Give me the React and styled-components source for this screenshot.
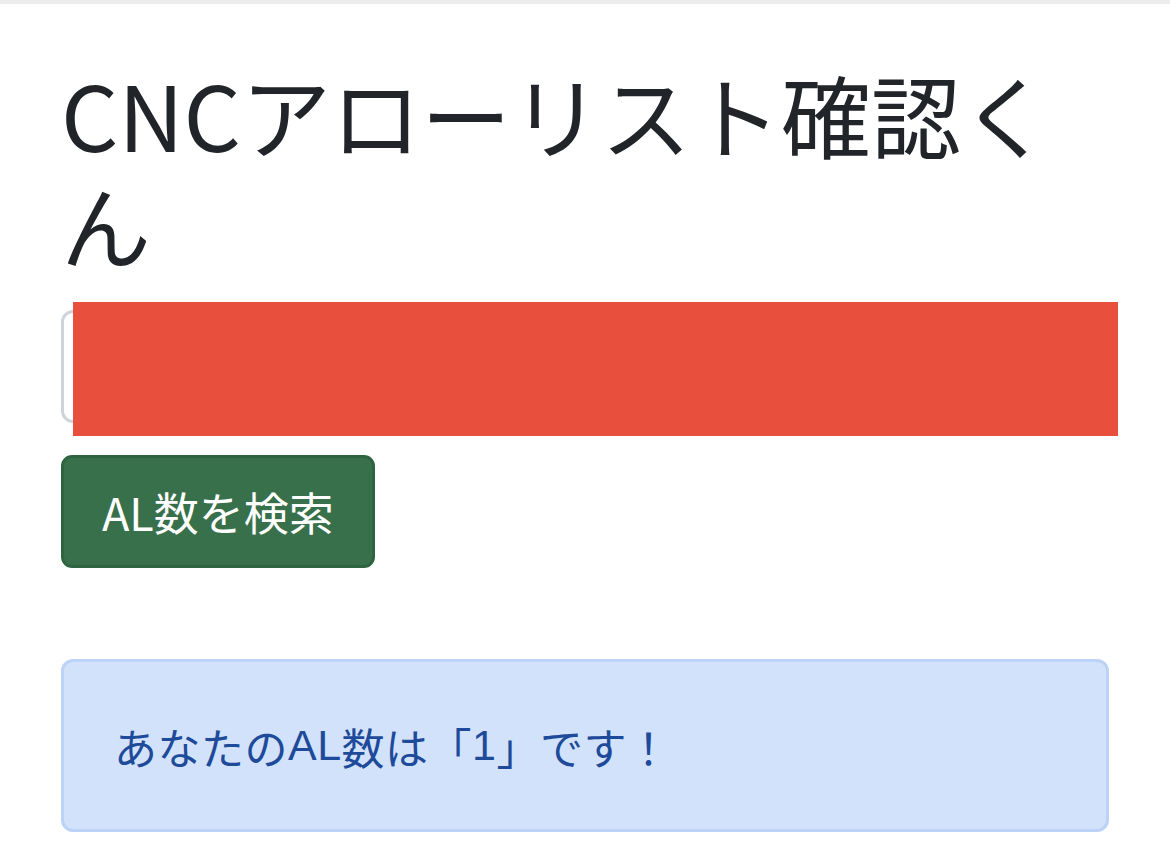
import styled, { createGlobalStyle } from 'styled-components';

const GlobalStyle = createGlobalStyle`
  html, body {
    margin: 0;
    padding: 0;
    background: #fff;
  }
  body {
    font-family: "Noto Sans CJK JP", "Noto Sans", sans-serif;
    color: #212529;
  }
`;

const TopStrip = styled.div`
  height: 4px;
  background: #ececec;
`;

const Container = styled.main`
  padding: 0 60px 0 61px;
  display: flex;
  flex-direction: column;
  align-items: flex-start;
`;

const Title = styled.h1`
  margin: 54px 0 0;
  font-size: 90px;
  font-weight: 400;
  line-height: 110px;
  width: 100%;
`;

const InputWrap = styled.div`
  position: relative;
  width: 100%;
  margin-top: 32px;
`;

const TextInput = styled.input`
  box-sizing: border-box;
  display: block;
  width: 100%;
  height: 113px;
  padding: 18px 36px;
  font-size: 48px;
  font-family: inherit;
  border: 3px solid #ced4da;
  border-radius: 12px;
  background: #fff;
`;

const Redaction = styled.div`
  position: absolute;
  left: 12px;
  top: -8px;
  right: -8px;
  bottom: -13px;
  background: #e84f3d;
`;

const SearchButton = styled.button`
  margin-top: 32px;
  box-sizing: border-box;
  height: 113px;
  padding: 0 38px;
  font-family: inherit;
  font-size: 45px;
  color: #fff;
  background: #37704b;
  border: 3px solid #2f6441;
  border-radius: 11px;
  cursor: pointer;
`;

const Alert = styled.div`
  box-sizing: border-box;
  margin-top: 91px;
  width: calc(100% - 1px);
  height: 173px;
  display: flex;
  align-items: center;
  padding: 0 50px;
  font-size: 43px;
  letter-spacing: 0.5px;
  color: #1e4a9a;
  background: #d2e2fb;
  border: 3px solid #bcd2f6;
  border-radius: 12px;
`;

const Latin = styled.span`
  font-family: "Liberation Sans", "Noto Sans CJK JP", sans-serif;
`;

export default function App() {
  return (
    <>
      <GlobalStyle />
      <TopStrip />
      <Container>
        <Title>CNCアローリスト確認くん</Title>
        <InputWrap>
          <TextInput type="text" aria-label="ユーザー名" />
          <Redaction />
        </InputWrap>
        <SearchButton type="button">AL数を検索</SearchButton>
        <Alert>
          あなたの<Latin>AL</Latin>数は「<Latin>1</Latin>」です！
        </Alert>
      </Container>
    </>
  );
}
